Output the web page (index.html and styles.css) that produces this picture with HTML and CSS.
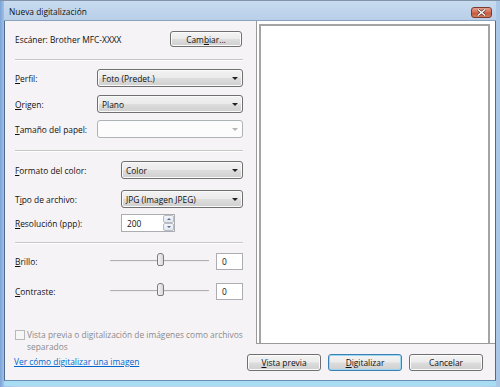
FILE: index.html
```html
<!DOCTYPE html>
<html lang="es">
<head>
    <meta charset="UTF-8">
    <title>Nueva digitalización</title>
    <link rel="stylesheet" href="styles.css">
</head>
<body>
    <div class="window">
        <div class="titlebar">
            <span class="title">Nueva digitalización</span>
            <span class="close">
                <svg width="9" height="7" viewBox="0 0 9 7">
                    <path d="M1 0.5 L8 6.5 M8 0.5 L1 6.5" stroke="#5a2a22" stroke-width="2.6"/>
                    <path d="M1 0.5 L8 6.5 M8 0.5 L1 6.5" stroke="#ffffff" stroke-width="1.4"/>
                </svg>
            </span>
        </div>

        <div class="client">
            <div class="left">
                <div class="row scanner-row">
                    <span class="scanner">Escáner: Brother MFC-XXXX</span>
                    <button class="btn btn-change">Cam<u>b</u>iar...</button>
                </div>

                <div class="sep sep-1"></div>

                <div class="row group-a">
                    <label><u>P</u>erfil:</label>
                    <div class="combo">Foto (Predet.)<span class="arrow"></span></div>
                </div>
                <div class="row group-a">
                    <label><u>O</u>rigen:</label>
                    <div class="combo">Plano<span class="arrow"></span></div>
                </div>
                <div class="row group-a last">
                    <label><u>T</u>amaño del papel:</label>
                    <div class="combo disabled"><span class="arrow"></span></div>
                </div>

                <div class="sep sep-2"></div>

                <div class="row group-b row-format">
                    <label><u>F</u>ormato del color:</label>
                    <div class="combo">Color<span class="arrow"></span></div>
                </div>
                <div class="row group-b row-type">
                    <label>T<u>i</u>po de archivo:</label>
                    <div class="combo">JPG (Imagen JPEG)<span class="arrow"></span></div>
                </div>
                <div class="row group-b row-res">
                    <label><u>R</u>esolución (ppp):</label>
                    <div class="spin">
                        <span class="spin-value">200</span>
                        <span class="spin-buttons">
                            <span class="spin-btn"><span class="up"></span></span>
                            <span class="spin-btn"><span class="down"></span></span>
                        </span>
                    </div>
                </div>

                <div class="sep sep-3"></div>

                <div class="row slider-row row-bright">
                    <label><u>B</u>rillo:</label>
                    <div class="slider"><span class="track"></span><span class="thumb"></span></div>
                    <div class="num">0</div>
                </div>
                <div class="row slider-row row-contrast">
                    <label><u>C</u>ontraste:</label>
                    <div class="slider"><span class="track"></span><span class="thumb"></span></div>
                    <div class="num">0</div>
                </div>

                <div class="check-row">
                    <span class="checkbox"></span>
                    <span class="check-text">Vista previa o digitalización de imágenes como archivos separados</span>
                </div>

                <a class="link" href="#">Ver cómo digitalizar una imagen</a>
            </div>

            <div class="right">
                <div class="preview">
                    <div class="preview-inner"></div>
                </div>
                <div class="buttons">
                    <button class="btn"><u>V</u>ista previa</button>
                    <button class="btn btn-default"><u>D</u>igitalizar</button>
                    <button class="btn">Cancelar</button>
                </div>
            </div>
        </div>
    </div>
</body>
</html>
```

FILE: styles.css
```css
body {
    margin: 0;
    font-family: 'Open Sans', 'Noto Sans', sans-serif;
    font-size: 8.4px;
    color: #111111;
}

.window {
    width: 500px;
    height: 387px;
    box-sizing: border-box;
    background: linear-gradient(to right, #7aa3d8 0px, #a2c0e6 4px, #bcd3ea 20px, #bcd3ea 480px, #a9c6e6 100%);
    border-top: 1px solid #8093a8;
    display: flex;
    flex-direction: column;
}

.titlebar {
    height: 20px;
    flex-shrink: 0;
    display: flex;
    align-items: center;
    justify-content: space-between;
    padding: 0 7px 0 5px;
    background: linear-gradient(to bottom, #c8dbef, #b8cfe8);
    border-bottom: 1px solid #8aa2bf;
    margin: 0 4px;
    box-sizing: border-box;
}

.title {
    color: #111111;
    margin-top: 2px;
}

.close {
    width: 21px;
    height: 11px;
    margin-top: 3px;
    margin-right: -3px;
    box-sizing: border-box;
    border: 1px solid #7a3c30;
    border-radius: 3px;
    background: linear-gradient(to bottom, #e4a08e, #cf6a50 50%, #c0553a 51%, #d07a5c);
    display: flex;
    align-items: center;
    justify-content: center;
}

.client {
    flex: 1;
    margin: 0 4px 6px;
    background: #f6f3f7;
    border-left: 1px solid #4e6a8e;
    border-right: 1px solid #4e6a8e;
    border-bottom: 1px solid #6a8fb5;
    display: flex;
    box-shadow: 0 5px 0 #a8dcf3;
}

.left {
    width: 228px;
    padding-left: 10px;
    display: flex;
    flex-direction: column;
}

.row {
    display: flex;
    align-items: center;
    height: 18px;
}

.scanner-row {
    margin-top: 10px;
    height: 16px;
    justify-content: space-between;
}

.btn {
    font-family: inherit;
    font-size: 8.4px;
    color: #111111;
    height: 17px;
    padding: 0;
    border: 1px solid #707070;
    border-radius: 3px;
    background: linear-gradient(to bottom, #f4f4f4, #ebebeb 48%, #dddddd 52%, #cfcfcf);
    box-shadow: inset 0 0 0 1px #fbfbfb;
}

.btn-change {
    width: 72px;
    height: 16px;
    margin-right: 1px;
}

.sep {
    border-top: 1px solid #c6c6c6;
    border-bottom: 1px solid #ffffff;
}

.sep-1 { margin-top: 12px; }
.sep-2 { margin-top: 12px; }
.sep-3 { margin-top: 10px; }

.group-a {
    margin-top: 8px;
}

.group-a.last {
    margin-top: 7px;
}

.group-a label {
    width: 82px;
}

.group-b label {
    width: 106px;
}

.row-format { margin-top: 9px; }
.row-type { margin-top: 11px; }
.row-res { margin-top: 6px; }

.combo {
    flex: 1;
    height: 18px;
    box-sizing: border-box;
    border: 1px solid #707070;
    border-radius: 3px;
    background: linear-gradient(to bottom, #f2f2f2, #ebebeb 48%, #dddddd 52%, #cfcfcf);
    box-shadow: inset 0 0 0 1px #fafafa;
    padding-left: 4px;
    display: flex;
    align-items: center;
    position: relative;
}

.combo.disabled {
    background: #fcfcfc;
    border-color: #adb2b5;
    box-shadow: none;
}

.arrow {
    position: absolute;
    right: 4px;
    top: 7px;
    border-left: 3px solid transparent;
    border-right: 3px solid transparent;
    border-top: 3px solid #222222;
}

.combo.disabled .arrow {
    border-top-color: #b4b4b4;
}

.spin {
    width: 54px;
    height: 18px;
    box-sizing: border-box;
    border: 1px solid #abadb3;
    background: #ffffff;
    display: flex;
    align-items: center;
    justify-content: space-between;
    padding-left: 5px;
}

.spin-buttons {
    width: 11px;
    height: 16px;
    display: flex;
    flex-direction: column;
}

.spin-btn {
    flex: 1;
    border: 1px solid #b8bcc4;
    border-radius: 2px;
    background: linear-gradient(to bottom, #f5f6f8, #e2e5ea);
    display: flex;
    align-items: center;
    justify-content: center;
}

.up {
    border-left: 2px solid transparent;
    border-right: 2px solid transparent;
    border-bottom: 2px solid #4a6fa0;
}

.down {
    border-left: 2px solid transparent;
    border-right: 2px solid transparent;
    border-top: 2px solid #4a6fa0;
}

.slider-row label {
    width: 95px;
}

.row-bright {
    margin-top: 9px;
    height: 17px;
}

.row-contrast {
    margin-top: 13px;
    height: 17px;
}

.slider {
    width: 99px;
    height: 17px;
    position: relative;
}

.track {
    position: absolute;
    left: 0;
    right: 0;
    top: 7px;
    border-top: 1px solid #b0b0b0;
    border-bottom: 1px solid #ececec;
}

.thumb {
    position: absolute;
    left: 47px;
    top: 0;
    width: 7px;
    height: 13px;
    box-sizing: border-box;
    border: 1px solid #7c7c7c;
    border-radius: 3px 3px 2px 2px;
    background: linear-gradient(to right, #f4f4f4, #d8d8d8);
}

.num {
    width: 27px;
    height: 17px;
    box-sizing: border-box;
    margin-left: 7px;
    border: 1px solid #abadb3;
    background: #ffffff;
    padding-left: 5px;
    display: flex;
    align-items: center;
}

.check-row {
    margin-top: 29px;
    display: flex;
    align-items: flex-start;
}

.checkbox {
    width: 10px;
    height: 10px;
    box-sizing: border-box;
    border: 1px solid #b8b8b8;
    background: #f6f6f6;
    flex-shrink: 0;
    margin-top: 1px;
}

.check-text {
    color: #8a8a8a;
    margin-left: 2px;
    line-height: 12px;
}

.link {
    margin-top: 3px;
    color: #0066cc;
    margin-left: -1px;
}

.right {
    width: 239px;
    margin-left: 13px;
    display: flex;
    flex-direction: column;
}

.preview {
    height: 323px;
    box-sizing: border-box;
    border-left: 1px solid #9a9a9a;
    border-bottom: 1px solid #9a9a9a;
    background: #ffffff;
    padding: 3px 5px 0 2px;
}

.preview-inner {
    height: 100%;
    box-sizing: border-box;
    border: 2px solid #a4a4a4;
    border-bottom: none;
    background: #ffffff;
}

.buttons {
    display: flex;
    gap: 7px;
    margin-top: 10px;
    margin-left: -9px;
}

.buttons .btn {
    width: 74px;
}

.btn-default {
    border-color: #3c7fb1;
    box-shadow: inset 0 0 0 1px #9ad7f4;
}
```
